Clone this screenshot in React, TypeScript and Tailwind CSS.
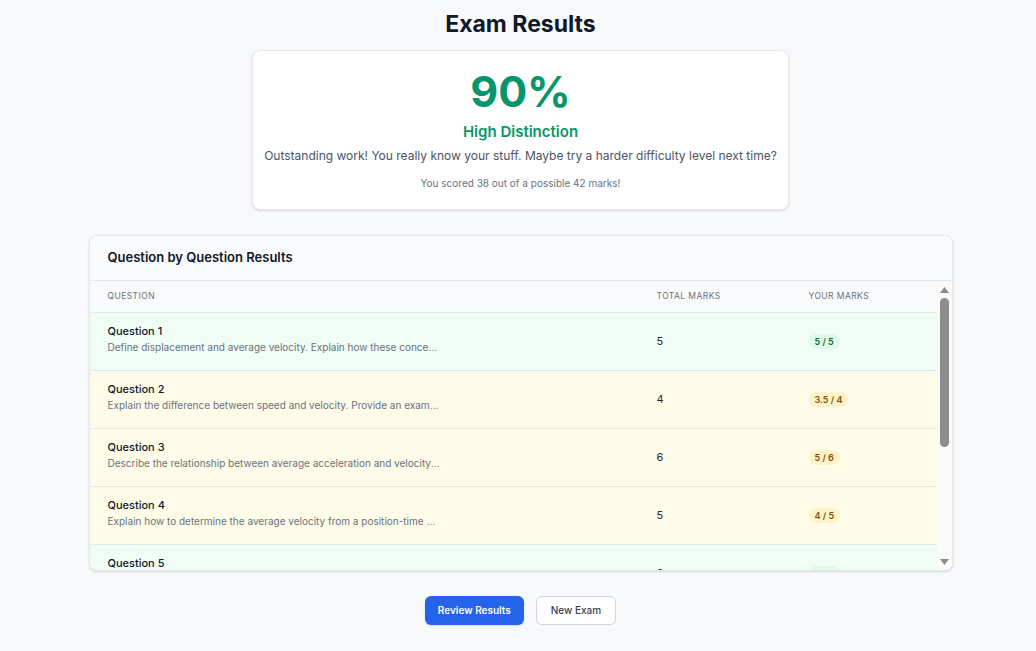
const questions = [
  { n: 1, text: "Define displacement and average velocity. Explain how these concepts differ from distance and speed.", total: 5, got: "5 / 5", tone: "green" },
  { n: 2, text: "Explain the difference between speed and velocity. Provide an example where they differ.", total: 4, got: "3.5 / 4", tone: "yellow" },
  { n: 3, text: "Describe the relationship between average acceleration and velocity over a time interval.", total: 6, got: "5 / 6", tone: "yellow" },
  { n: 4, text: "Explain how to determine the average velocity from a position-time graph.", total: 5, got: "4 / 5", tone: "yellow" },
  { n: 5, text: "Calculate the displacement of an object moving with constant acceleration from rest.", total: 6, got: "6 / 6", tone: "green" },
  { n: 6, text: "Interpret the slope of a velocity-time graph and relate it to acceleration.", total: 5, got: "5 / 5", tone: "green" },
  { n: 7, text: "Derive the kinematic equations for uniformly accelerated motion in one dimension.", total: 6, got: "5 / 6", tone: "yellow" },
  { n: 8, text: "Explain the motion of an object in free fall, ignoring air resistance.", total: 5, got: "4.5 / 5", tone: "yellow" },
];

// classic scrollbar drawn beside the results list
const ScrollRail = () => (
  <div className="w-[15px] shrink-0 flex flex-col items-center bg-[#fafafa]">
    <div className="h-[17px] flex items-center justify-center">
      <svg width="9" height="6" viewBox="0 0 9 6">
        <path d="M4.5 0 L9 6 L0 6 Z" fill="#8a8a8a" />
      </svg>
    </div>
    <div className="w-[9px] h-[149px] rounded-full bg-[#8d8d8d]" />
    <div className="flex-1" />
    <div className="h-[16px] flex items-center justify-center">
      <svg width="9" height="6" viewBox="0 0 9 6">
        <path d="M0 0 L9 0 L4.5 6 Z" fill="#8a8a8a" />
      </svg>
    </div>
  </div>
);

const App = () => {
  return (
    <div
      className="min-h-screen bg-[#f8f9fb] flex flex-col items-center pt-[10px] pl-[5px] text-gray-900"
      style={{ fontFamily: "Inter, 'Noto Sans', sans-serif" }}
    >
      <h1 className="text-[23px] leading-[28px] font-bold text-[#111827]">Exam Results</h1>

      <div className="mt-[12px] w-[537px] bg-white border border-gray-200 rounded-lg shadow-sm flex flex-col items-center pt-[12px] pb-[19px]">
        <div className="text-[43px] leading-[56px] font-bold text-[#079669]">90%</div>
        <div className="mt-[3px] text-[15px] leading-[20px] font-semibold text-[#079669]">High Distinction</div>
        <p className="mt-[6px] text-[12px] leading-[16px] text-gray-600">
          Outstanding work! You really know your stuff. Maybe try a harder difficulty level next time?
        </p>
        <p className="mt-[12px] text-[10px] leading-[14px] text-gray-500">You scored 38 out of a possible 42 marks!</p>
      </div>

      <div className="mt-[25px] w-[864px] bg-white border border-gray-200 rounded-lg shadow-sm overflow-hidden">
        <div className="h-[45px] px-[18px] flex items-center border-b border-gray-200 bg-[#f9fafb]">
          <h2 className="text-[13px] font-semibold text-gray-900">Question by Question Results</h2>
        </div>
        <div className="h-[289px] flex">
          <div className="flex-1 overflow-hidden">
            <div className="grid grid-cols-[549px_152px_1fr] h-[31px] items-center bg-[#f9fafb] text-[8.5px] tracking-wider uppercase text-gray-500">
              <div className="px-[18px]">Question</div>
              <div className="px-[18px]">Total Marks</div>
              <div className="px-[18px]">Your Marks</div>
            </div>
            {questions.map((q) => (
              <div
                key={q.n}
                className={
                  q.tone === "green"
                    ? "grid grid-cols-[549px_152px_1fr] h-[58px] items-center border-t border-gray-200 bg-[#f0fdf4]"
                    : "grid grid-cols-[549px_152px_1fr] h-[58px] items-center border-t border-gray-200 bg-[#fefce8]"
                }
              >
                <div className="self-start pt-[10px] px-[18px] min-w-0">
                  <div className="text-[11px] leading-[16px] font-medium text-gray-900">Question {q.n}</div>
                  <div className="mt-[1px] w-[333px] truncate text-[10px] leading-[14px] text-gray-500">{q.text}</div>
                </div>
                <div className="px-[18px] text-[11px] text-gray-800">{q.total}</div>
                <div className="px-[18px] flex">
                  <span
                    className={
                      q.tone === "green"
                        ? "inline-flex items-center h-[15px] rounded-full px-[6px] text-[9px] leading-none font-semibold bg-[#dcfce7] text-[#166534]"
                        : "inline-flex items-center h-[15px] rounded-full px-[6px] text-[9px] leading-none font-semibold bg-[#fef3c7] text-[#854d0e]"
                    }
                  >
                    {q.got}
                  </span>
                </div>
              </div>
            ))}
          </div>
          <ScrollRail />
        </div>
      </div>

      <div className="mt-[25px] flex gap-3">
        <button className="h-[29px] px-[13px] rounded-md bg-[#2563eb] text-white text-[10px] font-semibold shadow-sm">
          Review Results
        </button>
        <button className="h-[29px] px-[14px] rounded-md bg-white border border-gray-300 text-gray-700 text-[10px] font-medium">
          New Exam
        </button>
      </div>
    </div>
  );
};

export default App;
